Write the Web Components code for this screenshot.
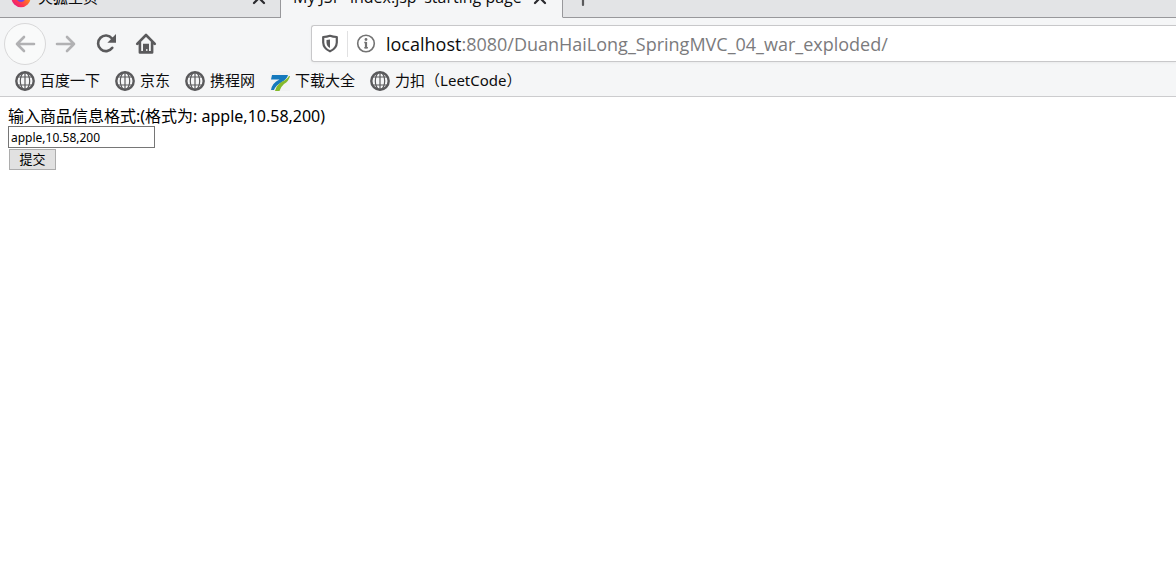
<!DOCTYPE html>
<html lang="zh-CN">
<head>
<meta charset="utf-8">
<title>My JSP 'index.jsp' starting page</title>
<style>
html, body { margin: 0; height: 100%; background: #fff; }
body { font-family: "Noto Sans", "Noto Sans CJK SC", sans-serif; color: #0c0c0d; }
</style>
</head>
<body>
<browser-window></browser-window>
<script>
const icons = {
  back: '<svg width="22" height="22" viewBox="0 0 22 22" fill="none" stroke="#b1b1b3" stroke-width="2.6" stroke-linecap="round" stroke-linejoin="round"><path d="M20 11H3M10 4L3 11l7 7"/></svg>',
  forward: '<svg width="22" height="22" viewBox="0 0 22 22" fill="none" stroke="#b1b1b3" stroke-width="2.6" stroke-linecap="round" stroke-linejoin="round"><path d="M2 11h17M12 4l7 7-7 7"/></svg>',
  reload: '<svg width="22" height="22" viewBox="0 0 22 22" fill="none" stroke="#5a5a5c" stroke-width="2.6" stroke-linecap="round"><path d="M17.300 14.800A7.800 7.800 0 1 1 17 5.500"/><path d="M21 1v8.800h-8.600z" fill="#5a5a5c" stroke="none"/></svg>',
  home: '<svg width="22" height="22" viewBox="0 0 22 22" fill="none" stroke="#5a5a5c" stroke-width="2.600" stroke-linecap="round" stroke-linejoin="round"><path d="M2.200 10.800L11 2l8.800 8.800M4.900 9.500v9.900h12.200V9.500"/><path d="M8 19v-8.200h6V19h-1.600v-3h-1.200v3z" fill="#5a5a5c" stroke="none"/></svg>',
  globe: '<svg width="20" height="20" viewBox="0 0 20 20" fill="none" stroke="#5a5a5c"><circle cx="10" cy="10" r="8.700" stroke-width="2.400"/><g stroke-width="1.200"><ellipse cx="10" cy="10" rx="4.700" ry="8.700"/><path d="M10 1v18M2.500 6h15M2.500 14h15"/></g></svg>',
  download: '<svg width="20" height="20" viewBox="0 0 20 20"><path fill="#f1f2f3" d="M0 0h20v20H0z"/><path d="M2 4h16q-1 4-6 7-6 3-8 8H1q1-7 8.500-10.500H1z" fill="#1479bd"/><path d="M19 5h1q-1 5-6 8-3.500 3-4.500 7H5q1.500-6 6.500-9Q17 8.500 19 5z" fill="#84b92b"/></svg>',
  shield: '<svg width="18" height="20" viewBox="0 0 18 20" fill="none" stroke="#5a5a5c" stroke-width="2.200" stroke-linejoin="round"><path d="M9 1.800Q12 3 15.800 3V8.500Q15.500 14.500 9 17.300 2.500 14.500 2.200 8.500V3Q6 3 9 1.800z"/><path d="M9 5.500V14Q5.500 12 5.500 8.500V6.100z" fill="#5a5a5c" stroke="none"/></svg>',
  info: '<svg width="20" height="20" viewBox="0 0 20 20" fill="none" stroke="#737373"><circle cx="10" cy="9.500" r="8.300" stroke-width="1.600"/><path d="M8.300 8.500h1.900M8.300 13.800h3.600" stroke-width="1.600"/><path d="M10 8v6.300" stroke-width="2.200"/><circle cx="10" cy="5.500" r="1.400" fill="#737373" stroke="none"/></svg>',
  close: '<svg width="16" height="16" viewBox="0 0 16 16" fill="none" stroke="#2a2a2e" stroke-width="2.200" stroke-linecap="round"><path d="M3 3l10 10M13 3L3 13"/></svg>',
  plus: '<svg width="20" height="20" viewBox="0 0 20 20" fill="none" stroke="#5a5a5c" stroke-width="2.200" stroke-linecap="round"><path d="M10 2v15M3 9.500h14"/></svg>',
  firefox: '<svg width="20" height="20" viewBox="0 0 20 20"><defs><linearGradient id="f" x1="1" y1="0" x2=".2" y2="1"><stop offset="0" stop-color="#ffd83b"/><stop offset=".45" stop-color="#ff7a22"/><stop offset=".75" stop-color="#ff3750"/><stop offset="1" stop-color="#e31587"/></linearGradient></defs><path d="M13 0q6.500 4 6.500 10A9.500 9.300 0 0 1 .5 10Q.5 5 4 2.500q1 2 3 2Q9 1.500 13 0z" fill="url(#f)"/><circle cx="10" cy="9.500" r="4.500" fill="#7542e5"/></svg>'
};

function define(name, html, setup) {
  const template = document.createElement('template');
  template.innerHTML = html;
  customElements.define(name, class extends HTMLElement {
    constructor() {
      super();
      this.attachShadow({ mode: 'open' }).append(template.content.cloneNode(true));
    }
    connectedCallback() { if (setup) setup(this); }
  });
}

define('ui-icon', '<style>:host{display:block;flex:none;line-height:0}svg{display:block}</style><span></span>',
  el => { el.shadowRoot.querySelector('span').innerHTML = icons[el.getAttribute('name')]; });

define('browser-tab', `
<style>
:host { box-sizing: border-box; display: flex; align-items: center; flex: 0 0 281px; height: 40px; padding: 0 13px 0 11px; gap: 7px;
  background: #e3e4e6; border: solid #98989b; border-width: 0 1px 1px 0; font-size: 15px; line-height: 20px; }
:host([active]) { flex-basis: 282px; padding-left: 12px; padding-right: 14px; background: #f5f6f7; border-bottom-color: #f5f6f7;
  font-family: "Open Sans", "Noto Sans CJK SC", sans-serif; font-size: 16px; }
.title { flex: 1; min-width: 0; white-space: nowrap; padding-bottom: 2px; }
button { border: 0; padding: 0; background: none; }
</style>
<slot name="icon"></slot><span class="title"><slot></slot></span>
<button aria-label="关闭标签页"><ui-icon name="close"></ui-icon></button>`);

define('tab-strip', `
<style>
:host { display: flex; align-items: flex-end; height: 18px; overflow: hidden; background: #e3e4e6; }
.rest { box-sizing: border-box; flex: 1; height: 40px; border-bottom: 1px solid #98989b; display: flex; align-items: center; padding-left: 10px; }
button { border: 0; padding: 0; background: none; }
</style>
<browser-tab><ui-icon slot="icon" name="firefox"></ui-icon>火狐主页</browser-tab>
<browser-tab active>My JSP 'index.jsp' starting page</browser-tab>
<div class="rest"><button aria-label="打开新标签页"><ui-icon name="plus"></ui-icon></button></div>`);

define('address-bar', `
<style>
:host { box-sizing: border-box; display: flex; align-items: center; flex: 1; min-width: 0; height: 37px; padding-left: 9px;
  background: #fff; border: 1px solid #c8c8ca; border-right: 0; border-radius: 3px 0 0 3px; box-shadow: 0 1px 3px #0000000d; }
.sep { width: 1px; height: 26px; margin: 0 8px; background: #e1e1e2; }
.url { margin-left: 10px; font-family: "Open Sans", sans-serif; font-size: 18px; line-height: 24px; color: #7b7b7d; white-space: nowrap; }
b { font-weight: 400; color: #0c0c0d; }
</style>
<ui-icon name="shield"></ui-icon><span class="sep"></span><ui-icon name="info"></ui-icon>
<div class="url" role="textbox" aria-label="地址"><b>localhost</b>:8080/DuanHaiLong_SpringMVC_04_war_exploded/</div>`);

define('nav-bar', `
<style>
:host { display: flex; align-items: center; height: 51px; padding-left: 4px; }
button { display: grid; place-items: center; box-sizing: border-box; width: 40px; height: 42px; padding: 0; border: 0; background: none; }
.back { width: 42px; border: 1px solid #d8d8d9; border-radius: 50%; background: #f9fafa; }
.tools { display: flex; flex: 0 0 307px; }
</style>
<div class="tools">
<button class="back" aria-label="后退"><ui-icon name="back"></ui-icon></button>
<button aria-label="前进"><ui-icon name="forward"></ui-icon></button>
<button aria-label="刷新"><ui-icon name="reload"></ui-icon></button>
<button aria-label="主页"><ui-icon name="home"></ui-icon></button>
</div>
<address-bar></address-bar>`);

define('bookmark-link', `
<style>
:host { display: block; }
a { display: flex; align-items: center; gap: 5px; color: #0c0c0d; text-decoration: none; font-size: 15px; line-height: 20px; white-space: nowrap; }
span { padding-bottom: 2px; }
</style>
<a href="#"><ui-icon></ui-icon><span><slot></slot></span></a>`,
  el => {
    const icon = document.createElement('ui-icon');
    icon.setAttribute('name', el.getAttribute('icon') || 'globe');
    el.shadowRoot.querySelector('ui-icon').replaceWith(icon);
  });

define('bookmark-bar', `
<style>:host { display: flex; gap: 15px; padding: 1px 15px 4px; border-bottom: 1px solid #ccccce; }</style>
<bookmark-link>百度一下</bookmark-link>
<bookmark-link>京东</bookmark-link>
<bookmark-link>携程网</bookmark-link>
<bookmark-link icon="download">下载大全</bookmark-link>
<bookmark-link>力扣（LeetCode）</bookmark-link>`);

define('goods-form', `
<style>
:host { display: block; padding: 9px 8px; font-size: 16px; line-height: 20px; color: #000; }
form { display: flex; flex-direction: column; align-items: flex-start; }
input, button { box-sizing: border-box; font-family: inherit; font-size: 13px; color: #000; border-radius: 0; }
input { width: 147px; height: 22px; padding: 0 2px; border: 1px solid #767676; background: #fff; font-size: 12px; }
button { width: 47px; height: 21px; margin: 1px; padding: 0; line-height: 19px; border: 1px solid #adadad; background: #e1e1e1; }
</style>
<form>
<label for="goods">输入商品信息格式:(格式为: apple,10.58,200)</label>
<input id="goods" type="text" value="apple,10.58,200">
<button type="button">提交</button>
</form>`);

define('browser-window', `
<style>
:host { display: block; }
header { background: #f5f6f7; }
</style>
<header><tab-strip></tab-strip><nav-bar></nav-bar><bookmark-bar></bookmark-bar></header>
<main><goods-form></goods-form></main>`);
</script>
</body>
</html>
